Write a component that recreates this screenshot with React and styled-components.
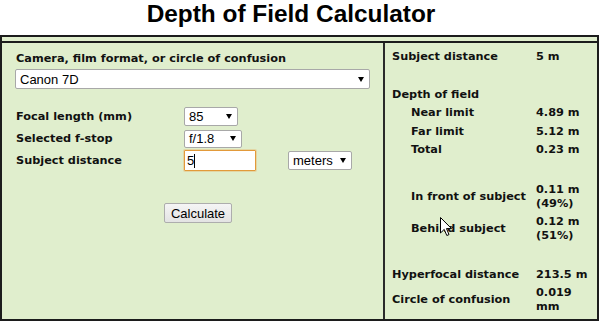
import React from "react";
import styled, { createGlobalStyle } from "styled-components";

const GlobalStyle = createGlobalStyle`
  body {
    margin: 0;
    background: #fff;
    font-family: "DejaVu Sans", Verdana, sans-serif;
  }
`;

const Page = styled.div`
  position: relative;
  width: 600px;
  height: 322px;
  overflow: hidden;
`;

const Title = styled.h1`
  margin: 0;
  height: 35px;
  font: bold 24.4px/28px "Liberation Sans", Arial, sans-serif;
  text-align: center;
  color: #000;
  padding-right: 18px;
`;

const Panel = styled.div`
  width: 599px;
  height: 286px;
  box-sizing: border-box;
  border: 2px solid #1c1c1c;
  background: #e0eecd;
  display: flex;
  flex-direction: column;
`;

const TopStrip = styled.div`
  flex: none;
  height: 4px;
  border-bottom: 2px solid #1c1c1c;
`;

const Columns = styled.div`
  flex: 1;
  display: flex;
`;

const FormCell = styled.div`
  width: 383px;
  box-sizing: border-box;
  border-right: 2px solid #2a2a2a;
  padding: 8px 0 0 14px;
  display: flex;
  flex-direction: column;
  align-items: flex-start;
`;

const ResultCell = styled.div`
  flex: 1;
  padding: 5px 0 0 7px;
  display: flex;
  flex-direction: column;
`;

const Label = styled.div`
  font: bold 11.3px/16px "DejaVu Sans", Verdana, sans-serif;
  color: #111;
  white-space: nowrap;
`;

const FormRow = styled.div`
  display: grid;
  grid-template-columns: 168px auto auto;
  align-items: center;
  height: 21px;
  margin-top: ${(p) => p.$top || 1}px;
`;

const Select = styled.div`
  display: flex;
  align-items: center;
  justify-content: space-between;
  box-sizing: border-box;
  width: ${(p) => p.$w}px;
  height: ${(p) => p.$h || 19}px;
  margin-top: ${(p) => p.$top || 0}px;
  margin-left: ${(p) => p.$left || 0}px;
  padding: 0 5px 0 4px;
  background: #fff;
  border: 1px solid #a8a8a8;
  border-radius: 2px;
  font: 13px "Liberation Sans", Arial, sans-serif;
  color: #000;
`;

const Arrow = styled.span`
  width: 0;
  height: 0;
  border-left: 3px solid transparent;
  border-right: 3px solid transparent;
  border-top: 5px solid #000;
`;

const TextField = styled.div`
  display: flex;
  align-items: center;
  box-sizing: border-box;
  width: 72px;
  height: 21px;
  padding-left: 2px;
  background: #fff;
  border: 1px solid #e29a3a;
  border-radius: 1px;
  box-shadow: 0 0 0 1px rgba(232, 170, 90, 0.35);
  font: 13px "Liberation Sans", Arial, sans-serif;
  color: #000;
`;

const Caret = styled.span`
  width: 1px;
  height: 14px;
  background: #000;
`;

const Button = styled.button`
  margin: 32px 0 0 148px;
  width: 68px;
  height: 20px;
  padding: 0;
  box-sizing: border-box;
  background: linear-gradient(#f5f5f5, #e3e3e3);
  border: 1px solid #adadad;
  border-radius: 2px;
  font: 13px "Liberation Sans", Arial, sans-serif;
  color: #000;
`;

const ResultRow = styled.div`
  display: grid;
  grid-template-columns: 144px 60px;
  align-items: center;
  padding: 2.25px 0;
  margin-top: ${(p) => p.$gap || 0}px;
`;

const ResultLabel = styled(Label)`
  line-height: 14px;
  padding-left: ${(p) => (p.$indent ? 19 : 0)}px;
`;

const Value = styled.div`
  font: bold 11.3px/14px "DejaVu Sans", Verdana, sans-serif;
  color: #111;
  white-space: nowrap;
`;

const Pointer = styled.svg`
  position: absolute;
  left: 440px;
  top: 217px;
`;

const results = [
  { label: "Subject distance", value: ["5 m"] },
  { label: "Depth of field", value: [], gap: 19 },
  { label: "Near limit", value: ["4.89 m"], indent: true },
  { label: "Far limit", value: ["5.12 m"], indent: true },
  { label: "Total", value: ["0.23 m"], indent: true },
  { label: "In front of subject", value: ["0.11 m", "(49%)"], indent: true, gap: 21 },
  { label: "Behind subject", value: ["0.12 m", "(51%)"], indent: true },
  { label: "Hyperfocal distance", value: ["213.5 m"], gap: 20 },
  { label: "Circle of confusion", value: ["0.019", "mm"] },
];

export default function App() {
  return (
    <Page>
      <GlobalStyle />
      <Title>Depth of Field Calculator</Title>
      <Panel>
        <TopStrip />
        <Columns>
          <FormCell>
            <Label>Camera, film format, or circle of confusion</Label>
            <Select $w={355} $h={20} $top={2} $left={-1}>
              Canon 7D
              <Arrow />
            </Select>
            <FormRow $top={17}>
              <Label>Focal length (mm)</Label>
              <Select $w={54}>
                85
                <Arrow />
              </Select>
            </FormRow>
            <FormRow>
              <Label>Selected f-stop</Label>
              <Select $w={58} $h={18}>
                f/1.8
                <Arrow />
              </Select>
            </FormRow>
            <FormRow>
              <Label>Subject distance</Label>
              <TextField>
                5
                <Caret />
              </TextField>
              <Select $w={64} $left={32}>
                meters
                <Arrow />
              </Select>
            </FormRow>
            <Button>Calculate</Button>
          </FormCell>
          <ResultCell>
            {results.map((r) => (
              <ResultRow key={r.label} $gap={r.gap}>
                <ResultLabel $indent={r.indent}>{r.label}</ResultLabel>
                <Value>
                  {r.value.map((v) => (
                    <div key={v}>{v}</div>
                  ))}
                </Value>
              </ResultRow>
            ))}
          </ResultCell>
        </Columns>
      </Panel>
      <Pointer width="13" height="20" viewBox="0 0 13 20">
        <path
          d="M0.5 0.5 L0.5 16 L4.2 12.4 L6.8 18.5 L9 17.6 L6.5 11.6 L11.5 11.6 Z"
          fill="#fff"
          stroke="#000"
          strokeWidth="1"
          strokeLinejoin="round"
        />
      </Pointer>
    </Page>
  );
}
